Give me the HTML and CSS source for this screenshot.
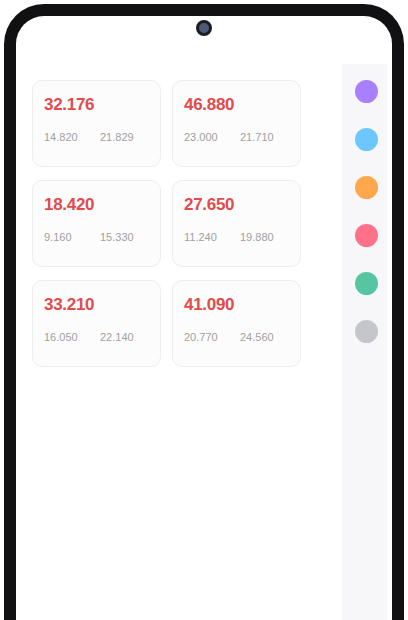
FILE: index.html
```html
<!DOCTYPE html>
<html lang="en">
<head>
  <meta charset="UTF-8" />
  <title>Quotes</title>
  <link rel="stylesheet" href="styles.css">
</head>
<body>

  <div class="phone">
    <div class="camera"></div>
    <div class="screen">
      <div class="main">
        <div class="cards">
          <div class="card">
            <div class="price">32.176</div>
            <div class="range"><span>14.820</span><span>21.829</span></div>
          </div>
          <div class="card">
            <div class="price">46.880</div>
            <div class="range"><span>23.000</span><span>21.710</span></div>
          </div>
          <div class="card">
            <div class="price">18.420</div>
            <div class="range"><span>9.160</span><span>15.330</span></div>
          </div>
          <div class="card">
            <div class="price">27.650</div>
            <div class="range"><span>11.240</span><span>19.880</span></div>
          </div>
          <div class="card">
            <div class="price">33.210</div>
            <div class="range"><span>16.050</span><span>22.140</span></div>
          </div>
          <div class="card">
            <div class="price">41.090</div>
            <div class="range"><span>20.770</span><span>24.560</span></div>
          </div>
        </div>
      </div>

      <!-- colour picker -->
      <div class="side">
        <span class="dot purple"></span>
        <span class="dot blue"></span>
        <span class="dot orange"></span>
        <span class="dot pink"></span>
        <span class="dot green"></span>
        <span class="dot grey"></span>
      </div>
    </div>
  </div>

</body>
</html>
```

FILE: styles.css
```css
body {
  font-family: "Liberation Sans", Arial, sans-serif;
  margin: 0;
  padding: 0;
  background: #fff;
  overflow: hidden;
}
.phone {
  position: relative;
  margin: 4px 4px 0;
  height: 616px;
  box-sizing: border-box;
  border: 12px solid #111113;
  border-bottom: none;
  border-radius: 40px 40px 0 0;
  background: #fff;
}
.camera {
  position: absolute;
  top: 4px;
  left: 50%;
  margin-left: -8px;
  width: 10px;
  height: 10px;
  border: 3px solid #1c1d22;
  border-radius: 50%;
  background: #4b5b78;
}
.screen {
  display: flex;
  height: 100%;
  padding-top: 48px;
  box-sizing: border-box;
}
.main {
  flex: 1;
  padding: 16px 0 0 16px;
}
.cards {
  display: grid;
  grid-template-columns: 129px 129px;
  column-gap: 11px;
  row-gap: 13px;
}
.card {
  height: 87px;
  box-sizing: border-box;
  padding: 14px 11px 0;
  background: #fcfcfc;
  border: 1px solid #eeeeee;
  border-radius: 10px;
}
.price {
  font-size: 17px;
  font-weight: bold;
  letter-spacing: -0.3px;
  color: #e24a4c;
}
.range {
  display: flex;
  margin-top: 16px;
  font-size: 11px;
  color: #a0a0a0;
}
.range span:first-child {
  width: 56px;
  flex-shrink: 0;
}
.side {
  width: 45px;
  margin-right: 5px;
  padding: 16px 0 0 13px;
  box-sizing: border-box;
  background: #f7f7f9;
  display: flex;
  flex-direction: column;
  gap: 25px;
}
.dot {
  width: 23px;
  height: 23px;
  border-radius: 50%;
}
.purple { background: #a880fb; }
.blue { background: #6ec6ff; }
.orange { background: #ffa74c; }
.pink { background: #ff7189; }
.green { background: #56c6a0; }
.grey { background: #c5c5cc; }
```
